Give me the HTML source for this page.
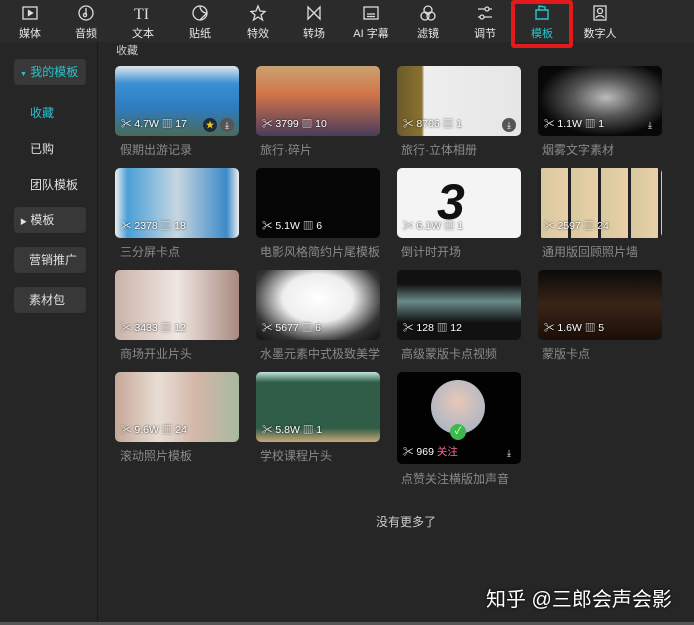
<!DOCTYPE html>
<html><head><meta charset="utf-8"><style>
*{margin:0;padding:0;box-sizing:border-box}
body{width:694px;height:625px;background:#262626;font-family:"Liberation Sans","Noto Sans CJK SC",sans-serif;color:#ddd;position:relative;overflow:hidden;font-size:12px}
.top{position:absolute;left:0;top:0;width:694px;height:42px;background:#2b2b2b}
.nav{position:absolute;top:0;width:50px;margin-left:-25px;text-align:center}
.nav svg{display:block;margin:4px auto 0;width:18px;height:18px}
.nav span{display:block;font-size:11px;margin-top:3px;color:#e6e6e6}
.red{position:absolute;left:511px;top:0;width:62px;height:48px;border:4px solid #e3191b;border-radius:3px}
.side{position:absolute;left:0;top:42px;width:98px;height:580px;border-right:1px solid #1a1a1a;background:#262626}
.btn{position:absolute;left:14px;width:72px;height:26px;background:#383838;border-radius:4px;font-size:12px;line-height:26px;padding-left:15px;color:#e0e0e0}
.si{position:absolute;left:30px;font-size:12px;color:#e0e0e0}
.card{position:absolute;width:124px;height:70px;border-radius:5px;overflow:hidden}
.meta{position:absolute;left:6px;bottom:5px;font-size:10.5px;color:#fff;text-shadow:0 0 2px #000}
.dl{position:absolute;right:5px;bottom:4px;width:14px;height:14px;border-radius:7px;background:#555;color:#fff;font-size:9px;text-align:center;line-height:14px}
.t{position:absolute;font-size:12px;color:#8a8a8a}
</style></head><body>
<div class="top"></div>
<div class="nav" style="left:30px"><svg viewBox="0 0 18 18" fill="none" stroke="#ddd" stroke-width="1.3"><rect x="2" y="3" width="14" height="12"/><path d="M7.5 6.5v5l4-2.5z" fill="#ddd"/></svg><span>媒体</span></div>
<div class="nav" style="left:86px"><svg viewBox="0 0 18 18" fill="none" stroke="#ddd" stroke-width="1.3"><circle cx="9" cy="9" r="7"/><path d="M9 4v7"/><circle cx="8" cy="11" r="1.6"/></svg><span>音频</span></div>
<div class="nav" style="left:143px"><svg viewBox="0 0 18 18"><text x="0" y="15" font-size="16" fill="#ddd" font-family="Liberation Serif">TI</text></svg><span>文本</span></div>
<div class="nav" style="left:200px"><svg viewBox="0 0 18 18" fill="none" stroke="#ddd" stroke-width="1.3"><path d="M16 9a7 7 0 1 1-7-7c4 0 7 3 7 7l-7 7"/><path d="M9 2c0 4 3 7 7 7"/></svg><span>贴纸</span></div>
<div class="nav" style="left:258px"><svg viewBox="0 0 18 18" fill="none" stroke="#ddd" stroke-width="1.3"><path d="M9 2l2 5 5 .5-4 3.5 1.5 5L9 13l-4.5 3 1.5-5-4-3.5 5-.5z"/></svg><span>特效</span></div>
<div class="nav" style="left:314px"><svg viewBox="0 0 18 18" fill="none" stroke="#ddd" stroke-width="1.3"><path d="M3 3v12l12-12v12z"/></svg><span>转场</span></div>
<div class="nav" style="left:371px"><svg viewBox="0 0 18 18" fill="none" stroke="#ddd" stroke-width="1.3"><rect x="2" y="3" width="14" height="12"/><path d="M5 10h8M5 12.5h8"/></svg><span>AI 字幕</span></div>
<div class="nav" style="left:428px"><svg viewBox="0 0 18 18" fill="none" stroke="#ddd" stroke-width="1.3"><circle cx="9" cy="6" r="4"/><circle cx="6" cy="12" r="4"/><circle cx="12" cy="12" r="4"/></svg><span>滤镜</span></div>
<div class="nav" style="left:485px"><svg viewBox="0 0 18 18" fill="none" stroke="#ddd" stroke-width="1.3"><path d="M2 5h14M2 13h14"/><circle cx="11" cy="5" r="2" fill="#2b2b2b"/><circle cx="6" cy="13" r="2" fill="#2b2b2b"/></svg><span>调节</span></div>
<div class="nav" style="left:542px"><svg viewBox="0 0 18 18" fill="none" stroke="#27c4cf" stroke-width="1.4"><path d="M3 6h12v9H3zM6 6V2l6 1v3"/></svg><span style="color:#27c4cf">模板</span></div>
<div class="nav" style="left:600px"><svg viewBox="0 0 18 18" fill="none" stroke="#ddd" stroke-width="1.3"><rect x="3" y="2" width="12" height="14"/><circle cx="9" cy="7" r="2.5"/><path d="M5 14c1-3 7-3 8 0"/></svg><span>数字人</span></div>
<div class="red"></div>
<div class="side">
<div class="btn" style="top:17px;color:#27c4cf;padding-left:6px"><span style="font-size:7px">▼</span> 我的模板</div>
<div class="si" style="top:62px;color:#27c4cf">收藏</div>
<div class="si" style="top:98px">已购</div>
<div class="si" style="top:134px">团队模板</div>
<div class="btn" style="top:165px;padding-left:6px"><span style="font-size:7px">▶</span> 模板</div>
<div class="btn" style="top:205px">营销推广</div>
<div class="btn" style="top:245px">素材包</div>
</div>
<div style="position:absolute;left:116px;top:42px;font-size:11px;color:#ccc">收藏</div>

<div class="card" style="left:115px;top:66px;background:linear-gradient(180deg,#dfe6ee 0,#3b8fd3 25%,#2e7cc0 60%,#4a6a58 100%)"><div class="meta">✂ 4.7W ▥ 17</div><div class="dl" style="right:22px;background:#1b2b3b;color:#f2c318">★</div><div class="dl">⤓</div></div>
<div class="t" style="left:120px;top:141px">假期出游记录</div>
<div class="card" style="left:256px;top:66px;background:linear-gradient(180deg,#c9a270,#d2744a 40%,#4a3c5a)"><div class="meta">✂ 3799 ▥ 10</div></div>
<div class="t" style="left:260px;top:141px">旅行·碎片</div>
<div class="card" style="left:397px;top:66px;background:linear-gradient(90deg,#6b5a2a 0,#8a7230 20%,#eee 22%,#e6e6e6 100%)"><div class="meta">✂ 8706 ▥ 1</div><div class="dl">⤓</div></div>
<div class="t" style="left:401px;top:141px">旅行·立体相册</div>
<div class="card" style="left:538px;top:66px;background:radial-gradient(ellipse at 55% 45%,#bbb 0,#555 35%,#080808 70%)"><div class="meta">✂ 1.1W ▥ 1</div><div class="dl" style="background:none">⤓</div></div>
<div class="t" style="left:542px;top:141px">烟雾文字素材</div>

<div class="card" style="left:115px;top:168px;background:linear-gradient(90deg,#eee 0,#4aa0d8 10%,#c7d6e0 50%,#3d8ac8 90%,#eee)"><div class="meta">✂ 2378 ▥ 18</div></div>
<div class="t" style="left:120px;top:243px">三分屏卡点</div>
<div class="card" style="left:256px;top:168px;background:#050505"><div class="meta">✂ 5.1W ▥ 6</div></div>
<div class="t" style="left:260px;top:243px">电影风格简约片尾模板</div>
<div class="card" style="left:397px;top:168px;background:#f4f4f4"><div style="position:absolute;left:40px;top:6px;font-size:50px;font-weight:bold;color:#111;font-style:italic;line-height:56px">3</div><div class="meta">✂ 6.1W ▥ 1</div></div>
<div class="t" style="left:401px;top:243px">倒计时开场</div>
<div class="card" style="left:538px;top:168px;background:repeating-linear-gradient(90deg,#222 0,#222 3px,#d9c9a0 3px,#e8d0a8 30px)"><div class="meta">✂ 2597 ▥ 24</div></div>
<div class="t" style="left:542px;top:243px">通用版回顾照片墙</div>

<div class="card" style="left:115px;top:270px;background:linear-gradient(90deg,#c9b3a8,#f0e6e2 50%,#a88a80)"><div class="meta">✂ 3433 ▥ 12</div></div>
<div class="t" style="left:120px;top:345px">商场开业片头</div>
<div class="card" style="left:256px;top:270px;background:radial-gradient(ellipse at 50% 40%,#fff 0,#eee 40%,#333 75%,#111)"><div class="meta">✂ 5677 ▥ 6</div></div>
<div class="t" style="left:260px;top:345px">水墨元素中式极致美学</div>
<div class="card" style="left:397px;top:270px;background:linear-gradient(180deg,#111 0,#111 20%,#6a8a88 45%,#111 75%)"><div class="meta">✂ 128 ▥ 12</div></div>
<div class="t" style="left:401px;top:345px">高级蒙版卡点视频</div>
<div class="card" style="left:538px;top:270px;background:linear-gradient(180deg,#0a0a0a 0,#3a2418 50%,#1a0e08)"><div class="meta">✂ 1.6W ▥ 5</div></div>
<div class="t" style="left:542px;top:345px">蒙版卡点</div>

<div class="card" style="left:115px;top:372px;background:linear-gradient(90deg,#c6a898,#e8ddd5 35%,#d3b7a8 65%,#a9b8a0)"><div class="meta">✂ 9.6W ▥ 24</div></div>
<div class="t" style="left:120px;top:447px">滚动照片模板</div>
<div class="card" style="left:256px;top:372px;background:linear-gradient(180deg,#bfe5dc 0,#2f5d48 15%,#2f5d48 80%,#c9a878)"><div class="meta">✂ 5.8W ▥ 1</div></div>
<div class="t" style="left:260px;top:447px">学校课程片头</div>
<div class="card" style="left:397px;top:372px;height:92px;background:#020202"><div style="position:absolute;left:34px;top:8px;width:54px;height:54px;border-radius:27px;background:radial-gradient(circle at 50% 40%,#e8c8b8,#9ab0c8)"></div><div style="position:absolute;left:53px;top:52px;width:16px;height:16px;border-radius:8px;background:#3cb94a;color:#fff;font-size:10px;text-align:center;line-height:16px">✓</div><div class="meta">✂ 969 <span style="color:#f6a">关注</span></div><div class="dl" style="background:none">⤓</div></div>
<div class="t" style="left:401px;top:470px">点赞关注横版加声音</div>

<div style="position:absolute;left:376px;top:513px;font-size:12px;color:#ccc">没有更多了</div>
<div style="position:absolute;left:486px;top:583px;font-size:20px;color:#fff;text-shadow:0 0 3px #000">知乎 @三郎会声会影</div>
<div style="position:absolute;left:0;top:622px;width:694px;height:3px;background:#555"></div>
</body></html>
